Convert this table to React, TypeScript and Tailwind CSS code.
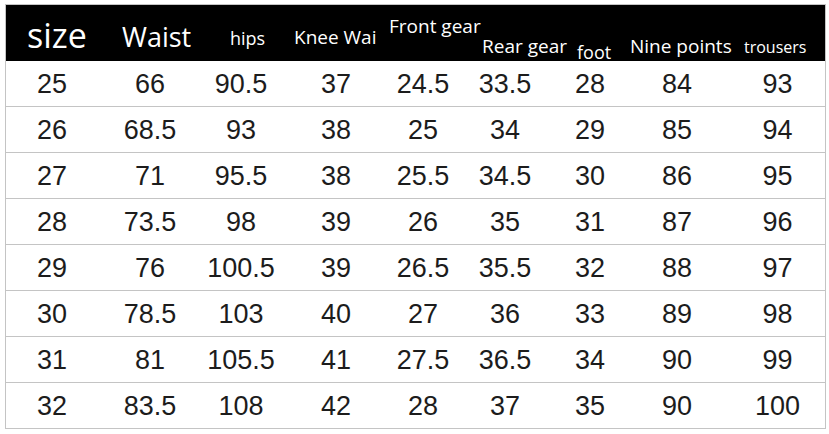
import React from "react";

const rows: string[][] = [
  ["25", "66", "90.5", "37", "24.5", "33.5", "28", "84", "93"],
  ["26", "68.5", "93", "38", "25", "34", "29", "85", "94"],
  ["27", "71", "95.5", "38", "25.5", "34.5", "30", "86", "95"],
  ["28", "73.5", "98", "39", "26", "35", "31", "87", "96"],
  ["29", "76", "100.5", "39", "26.5", "35.5", "32", "88", "97"],
  ["30", "78.5", "103", "40", "27", "36", "33", "89", "98"],
  ["31", "81", "105.5", "41", "27.5", "36.5", "34", "90", "99"],
  ["32", "83.5", "108", "42", "28", "37", "35", "90", "100"],
];

const colW = ["w-[92px]", "w-[104px]", "w-[78px]", "w-[112px]", "w-[62px]", "w-[102px]", "w-[68px]", "w-[106px]", "w-[95px]"];

export default function App() {
  return (
    <div className="w-[829px] h-[434px] bg-white pt-[4px] pl-[5px]">
      <div className="w-[821px] border border-[#c4c4c4] border-b-0">
        <div
          className="h-[56px] bg-black text-white flex items-start pl-[21px] whitespace-nowrap"
          style={{ fontFamily: '"Open Sans", "Noto Sans", sans-serif' }}
        >
          <span className="w-[95px] mt-[13px] text-[34px] leading-none">size</span>
          <span className="w-[108px] mt-[18px] text-[27px] leading-none">Waist</span>
          <span className="w-[64px] mt-[24px] text-[18px] leading-none">hips</span>
          <span className="w-[95px] mt-[23px] text-[19px] leading-none">Knee Wai</span>
          <span className="w-[93px] mt-[12px] text-[19px] leading-none">Front gear</span>
          <span className="w-[95px] mt-[32px] text-[19px] leading-none">Rear gear</span>
          <span className="w-[53px] mt-[38px] text-[18px] leading-none">foot</span>
          <span className="w-[114px] mt-[32px] text-[19px] leading-none">Nine points</span>
          <span className="mt-[34px] text-[16px] leading-none">trousers</span>
        </div>
        <div style={{ fontFamily: '"Liberation Sans", Arial, sans-serif' }} className="text-[#1c1c1c]">
          {rows.map((r, i) => (
            <div key={i} className="flex h-[46px] border-b border-[#c4c4c4] items-center pt-[1px]">
              {r.map((v, j) => (
                <div key={j} className={`${colW[j]} text-center text-[27px] leading-none`}>
                  {v}
                </div>
              ))}
            </div>
          ))}
        </div>
      </div>
    </div>
  );
}
